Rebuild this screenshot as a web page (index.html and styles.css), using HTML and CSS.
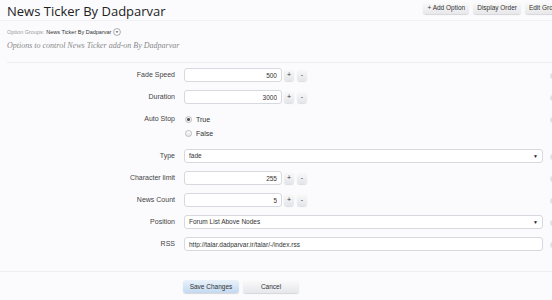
FILE: index.html
```html
<!DOCTYPE html>
<html lang="en">

<head>
    <meta charset="UTF-8">
    <title>News Ticker By Dadparvar</title>
    <link rel="stylesheet" href="styles.css">
</head>

<body>
    <!-- Заголовок сторінки -->
    <div class="title-bar">
        <h1>News Ticker By Dadparvar</h1>
        <div class="top-ctrl">
            <a class="btn">+ Add Option</a>
            <a class="btn">Display Order</a>
            <a class="btn">Edit Group</a>
        </div>
    </div>

    <div class="group-nav">
        Option Groups: <span class="group-name">News Ticker By Dadparvar</span>
        <svg class="group-icon" width="8" height="8" viewBox="0 0 8 8">
            <circle cx="4" cy="4" r="3.4" fill="#fff" stroke="#888" stroke-width="0.7"/>
            <path d="M2.5 3.3 L5.5 3.3 L4 5 Z" fill="#666"/>
        </svg>
    </div>
    <p class="desc">Options to control News Ticker add-on By Dadparvar</p>

    <!-- Форма опцій -->
    <form class="options">
        <div class="row">
            <label class="label">Fade Speed</label>
            <div class="ctrl">
                <input class="num" type="text" value="500">
                <span class="spin">+</span><span class="spin">-</span>
            </div>
            <span class="help"></span>
        </div>

        <div class="row">
            <label class="label">Duration</label>
            <div class="ctrl">
                <input class="num" type="text" value="3000">
                <span class="spin">+</span><span class="spin">-</span>
            </div>
            <span class="help"></span>
        </div>

        <div class="row tall">
            <label class="label">Auto Stop</label>
            <div class="ctrl radios">
                <label class="radio"><span class="dot on"></span>True</label>
                <label class="radio"><span class="dot"></span>False</label>
            </div>
            <span class="help"></span>
        </div>

        <div class="row">
            <label class="label">Type</label>
            <div class="ctrl">
                <div class="select">fade <span class="arrow">&#9660;</span></div>
            </div>
            <span class="help"></span>
        </div>

        <div class="row">
            <label class="label">Character limit</label>
            <div class="ctrl">
                <input class="num" type="text" value="255">
                <span class="spin">+</span><span class="spin">-</span>
            </div>
            <span class="help"></span>
        </div>

        <div class="row">
            <label class="label">News Count</label>
            <div class="ctrl">
                <input class="num" type="text" value="5">
                <span class="spin">+</span><span class="spin">-</span>
            </div>
            <span class="help"></span>
        </div>

        <div class="row">
            <label class="label">Position</label>
            <div class="ctrl">
                <div class="select">Forum List Above Nodes <span class="arrow">&#9660;</span></div>
            </div>
            <span class="help"></span>
        </div>

        <div class="row">
            <label class="label">RSS</label>
            <div class="ctrl">
                <input class="text" type="text" value="http://talar.dadparvar.ir/talar/-/index.rss">
            </div>
            <span class="help"></span>
        </div>

        <div class="submit">
            <span class="button primary">Save Changes</span>
            <span class="button">Cancel</span>
        </div>
    </form>
</body>

</html>
```

FILE: styles.css
```css
html,
body {
    overflow: hidden;
}

body {
    margin: 0;
    width: 552px;
    height: 300px;
    background-color: #FBFBFE; /* Майже білий фон */
    font-family: "Liberation Sans", Arial, sans-serif;
    color: #444;
}

.title-bar {
    display: flex;
    align-items: flex-start;
    justify-content: space-between;
    height: 20px;
    border-bottom: 1px solid #F0F2F6;
    margin-right: -12px;
}

h1 {
    margin: 2px 0 0 7px;
    font-size: 13px;
    font-weight: normal;
    color: #222;
    line-height: 18px;
    font-family: "Open Sans", sans-serif;
}

.top-ctrl {
    display: flex;
    gap: 4px;
    margin-top: 2px;
}

.top-ctrl .btn {
    display: block;
    height: 12px;
    line-height: 12px;
    padding: 0 4px;
    font-size: 6.5px;
    color: #333;
    background: linear-gradient(#FAFAFA, #E8E8EC);
    border-radius: 3px;
    box-shadow: 0 1px 1px rgba(0, 0, 0, 0.15);
}

.group-nav {
    margin: 7px 0 0 7px;
    font-size: 5.5px;
    color: #999;
    display: flex;
    align-items: center;
    gap: 2px;
    height: 8px;
}

.group-name {
    color: #333;
}

.desc {
    margin: 5px 0 0 7px;
    font-family: "Liberation Serif", serif;
    font-style: italic;
    font-size: 8px;
    line-height: 10px;
    color: #888;
    height: 10px;
}

.options {
    margin: 11px 0 0 7px;
    border-top: 1px solid #EDEFF3;
    padding-top: 5px;
}

.row {
    display: grid;
    grid-template-columns: 168px 359px 8px;
    column-gap: 9px;
    margin-bottom: 8px;
    font-size: 7px;
    align-items: start;
}

.row.tall {
    margin-bottom: 9px;
}

.row .help {
    margin-left: -2px;
    margin-top: 5px;
    width: 6px;
    height: 6px;
    border-radius: 50%;
    background-color: #E0E1E6;
}

.label {
    text-align: right;
    line-height: 14px;
    color: #444;
}

.ctrl {
    display: flex;
    align-items: center;
    gap: 2px;
    height: 14px;
}

input {
    box-sizing: border-box;
    height: 14px;
    border: 1px solid #D6D9DF;
    border-radius: 3px;
    background-color: #FFF;
    font-family: "Liberation Sans", Arial, sans-serif;
    font-size: 6.5px;
    color: #333;
    padding: 0 4px;
    margin: 0;
}

input.num {
    width: 98px;
    text-align: right;
}

input.text {
    width: 100%;
}

.spin {
    width: 10px;
    height: 12px;
    line-height: 12px;
    text-align: center;
    font-size: 7px;
    color: #333;
    background: linear-gradient(#FAFAFA, #E4E5EA);
    border-radius: 3px;
    box-shadow: 0 1px 1px rgba(0, 0, 0, 0.12);
}

.spin + .spin {
    margin-left: 1px;
}

.radios {
    flex-direction: column;
    align-items: flex-start;
    gap: 0;
    height: auto;
}

.radio {
    display: flex;
    align-items: center;
    gap: 4px;
    height: 14px;
    padding-left: 1px;
    color: #333;
}

.dot {
    box-sizing: border-box;
    width: 7px;
    height: 7px;
    border-radius: 50%;
    border: 1px solid #BBB;
    background: linear-gradient(#FFF, #E4E4E4);
}

.dot.on {
    background: radial-gradient(circle, #555 1.3px, #F4F4F4 1.6px);
}

.select {
    box-sizing: border-box;
    width: 100%;
    height: 14px;
    line-height: 12px;
    border: 1px solid #D6D9DF;
    border-radius: 3px;
    background-color: #FFF;
    font-size: 6.5px;
    color: #333;
    padding: 0 4px;
    display: flex;
    justify-content: space-between;
}

.select .arrow {
    font-size: 5px;
    color: #222;
}

.submit {
    margin-top: 20px;
    margin-left: -7px;
    border-top: 1px solid #EDEFF3;
    padding: 8px 0 0 183px;
    display: flex;
    gap: 4px;
}

.button {
    width: 56px;
    height: 13px;
    line-height: 13px;
    text-align: center;
    font-size: 6.5px;
    color: #333;
    border-radius: 3px;
    background: linear-gradient(#FAFAFA, #E6E7EC);
    box-shadow: 0 1px 1px rgba(0, 0, 0, 0.15);
}

.button.primary {
    background: linear-gradient(#EAF2FB, #C3D9F0);
}
```
